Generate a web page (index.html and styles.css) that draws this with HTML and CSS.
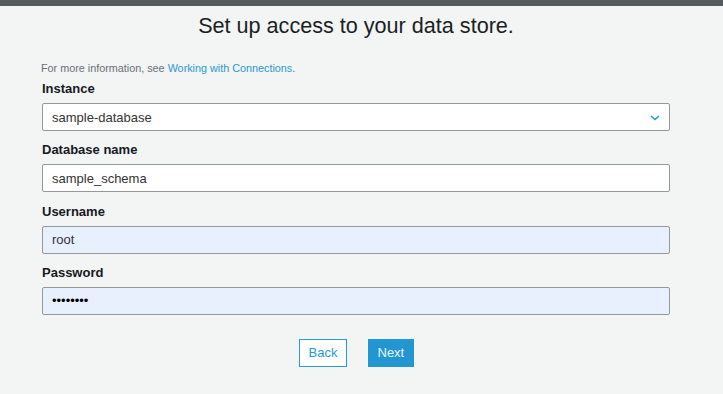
FILE: index.html
```html
<!DOCTYPE html>
<html>
<head>
	<meta charset="utf-8">
	<title>Set up access</title>
	<link rel="stylesheet" href="styles.css">
</head>
<body>
  <div class="topbar"></div>
  <div id="form_container">
    <h1>Set up access to your data store.</h1>
    <p class="info">For more information, see <a href="#">Working with Connections</a>.</p>
    <form id="main_form" name="main_form" onsubmit="return false;">
      <div class="field">
        <label for="instance">Instance</label>
        <div class="select_wrap">
          <select id="instance" name="instance">
            <option>sample-database</option>
          </select>
          <svg class="chevron" width="10" height="6" viewBox="0 0 10 6">
            <path d="M1 1 L5 4.5 L9 1" fill="none" stroke="#2a98d4" stroke-width="1.6"/>
          </svg>
        </div>
      </div>

      <div class="field">
        <label for="db_name">Database name</label>
        <input type="text" id="db_name" name="db_name" value="sample_schema">
      </div>

      <div class="field">
        <label for="username">Username</label>
        <input type="text" class="autofill" id="username" name="username" value="root">
      </div>

      <div class="field">
        <label for="password">Password</label>
        <input type="password" class="autofill" id="password" name="password" value="password">
      </div>

      <div class="buttons">
        <button type="button" class="btn btn_back">Back</button>
        <button type="submit" class="btn btn_next">Next</button>
      </div>
    </form>
  </div>
</body>
</html>
```

FILE: styles.css
```css
body {
	margin: 0;
	background-color: #f3f4f4;
	font-family: 'Liberation Sans', Arial, sans-serif;
	color: #16191f;
}

.topbar {
	height: 6px;
	background-color: #545b5e;
}

#form_container {
	width: 628px;
	margin-left: 42px;
}

h1 {
	margin: 7px 0 0;
	font-size: 21.6px;
	line-height: 26px;
	font-weight: normal;
	text-align: center;
	color: #1b1f24;
}

.info {
	margin: 22px 0 0 -1px;
	font-size: 10.8px;
	line-height: 14px;
	color: #687078;
}

.info a {
	color: #2a98d4;
	text-decoration: none;
}

form {
	margin-top: 6px;
}

.field {
	margin-bottom: 11.33px;
}

label {
	display: block;
	margin-bottom: 6px;
	font-size: 13px;
	line-height: 16px;
	font-weight: bold;
	color: #16191f;
}

input, select {
	display: block;
	width: 100%;
	height: 28px;
	box-sizing: border-box;
	margin: 0;
	padding: 0 9px;
	border: 1px solid #959899;
	border-radius: 2px;
	background-color: #fff;
	font-family: 'Liberation Sans', Arial, sans-serif;
	font-size: 13px;
	color: #333;
	outline: none;
}

select {
	appearance: none;
	-webkit-appearance: none;
}

.select_wrap {
	position: relative;
}

.chevron {
	position: absolute;
	right: 10px;
	top: 12px;
}

input.autofill {
	background-color: #e8f0fe;
}

input[type=password] {
	color: #000;
}

.buttons {
	display: flex;
	justify-content: center;
	gap: 21px;
	margin-top: 24px;
}

.btn {
	height: 28px;
	box-sizing: border-box;
	padding: 0 9px;
	border: 1px solid #2a98d4;
	border-radius: 0;
	font-family: 'Liberation Sans', Arial, sans-serif;
	font-size: 13px;
	cursor: pointer;
}

.btn_back {
	width: 48px;
	background-color: #fff;
	color: #2a98d4;
}

.btn_next {
	width: 46px;
	background-color: #2196d3;
	border-color: #2196d3;
	color: #eaf6fd;
}
```
